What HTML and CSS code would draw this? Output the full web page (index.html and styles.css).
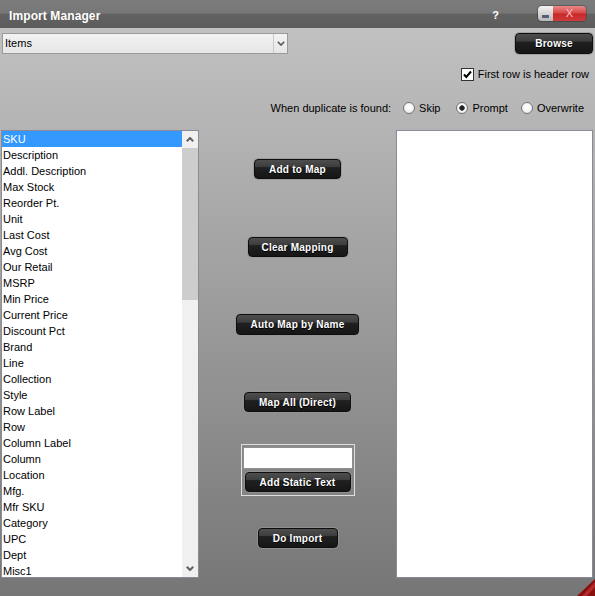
FILE: index.html
```html
<!DOCTYPE html>
<html>
<head>
<meta charset="utf-8">
<title>Import Manager</title>
<link rel="stylesheet" href="styles.css">
</head>
<body>
<div class="window">
  <div class="titlebar">
    <span class="title">Import Manager</span>
    <span class="help">?</span>
    <div class="winbtns">
      <span class="min"><i></i></span>
      <span class="close">X</span>
    </div>
  </div>
  <div class="content">
    <div class="toprow">
      <div class="select">
        <span class="sel-text">Items</span>
        <span class="sel-arrow"><svg width="8" height="5" viewBox="0 0 8 5"><path d="M0.8 0.8 L4 4 L7.2 0.8" fill="none" stroke="#555" stroke-width="1.6"/></svg></span>
      </div>
      <button class="btn browse">Browse</button>
    </div>
    <div class="checkrow">
      <span class="checkbox"><svg width="13" height="13" viewBox="0 0 13 13"><rect x="0.5" y="0.5" width="12" height="12" fill="#fff" stroke="#333"/><path d="M3 6.5 L5.3 9 L10 3.5" fill="none" stroke="#000" stroke-width="2"/></svg></span>
      <span>First row is header row</span>
    </div>
    <div class="radiorow">
      <span class="rlabel">When duplicate is found:</span>
      <span class="radio"></span><span class="rtext gap16">Skip</span>
      <span class="radio on"></span><span class="rtext gap13">Prompt</span>
      <span class="radio"></span><span class="rtext">Overwrite</span>
    </div>
    <div class="main">
      <div class="listbox">
        <ul class="items">
          <li class="sel">SKU</li>
          <li>Description</li>
          <li>Addl. Description</li>
          <li>Max Stock</li>
          <li>Reorder Pt.</li>
          <li>Unit</li>
          <li>Last Cost</li>
          <li>Avg Cost</li>
          <li>Our Retail</li>
          <li>MSRP</li>
          <li>Min Price</li>
          <li>Current Price</li>
          <li>Discount Pct</li>
          <li>Brand</li>
          <li>Line</li>
          <li>Collection</li>
          <li>Style</li>
          <li>Row Label</li>
          <li>Row</li>
          <li>Column Label</li>
          <li>Column</li>
          <li>Location</li>
          <li>Mfg.</li>
          <li>Mfr SKU</li>
          <li>Category</li>
          <li>UPC</li>
          <li>Dept</li>
          <li>Misc1</li>
        </ul>
        <div class="scrollbar">
          <span class="sb-btn"><svg width="8" height="5" viewBox="0 0 8 5"><path d="M0.8 4.2 L4 1 L7.2 4.2" fill="none" stroke="#606060" stroke-width="2"/></svg></span>
          <span class="sb-thumb"></span>
          <span class="sb-track"></span>
          <span class="sb-btn"><svg width="8" height="5" viewBox="0 0 8 5"><path d="M0.8 0.8 L4 4 L7.2 0.8" fill="none" stroke="#606060" stroke-width="2"/></svg></span>
        </div>
      </div>
      <div class="actions">
        <button class="btn b-add">Add to Map</button>
        <button class="btn b-clear">Clear Mapping</button>
        <button class="btn b-auto">Auto Map by Name</button>
        <button class="btn b-all">Map All (Direct)</button>
        <div class="static-group">
          <div class="static-input"></div>
          <button class="btn b-static">Add Static Text</button>
        </div>
        <button class="btn b-import">Do Import</button>
      </div>
      <div class="targetbox"></div>
    </div>
  </div>
  <svg class="grip" width="18" height="17" viewBox="0 0 18 17"><path d="M18 0 L18 17 L0 17 Z" fill="#8a1010"/><path d="M18 3 L18 8 L10 17 L5 17 Z" fill="#b52a2a"/></svg>
</div>
</body>
</html>
```

FILE: styles.css
```css
html, body {
  margin: 0;
  padding: 0;
}
body {
  width: 595px;
  height: 596px;
  overflow: hidden;
  font-family: "Liberation Sans", Arial, sans-serif;
  font-size: 11px;
  color: #000;
}
.window {
  position: relative;
  width: 595px;
  height: 596px;
  display: flex;
  flex-direction: column;
  background: linear-gradient(to bottom, #c1c1c1 0, #c1c1c1 28px, #767676 100%);
}

/* title bar */
.titlebar {
  flex: none;
  height: 28px;
  display: flex;
  align-items: center;
  padding: 0 9px;
  color: #fff;
  background: linear-gradient(to bottom, #7c7c7c 0, #777 13px, #626262 14px, #5c5c5c 100%);
}
.title {
  font-weight: bold;
  font-size: 12px;
  letter-spacing: 0.1px;
  padding-top: 3px;
}
.help {
  margin-left: auto;
  margin-right: 39px;
  font-weight: bold;
  font-size: 11px;
  padding-top: 1px;
}
.winbtns {
  display: flex;
  height: 15px;
  margin-top: -1px;
  border-radius: 4px;
  overflow: hidden;
  box-shadow: 0 0 0 1px rgba(40, 40, 40, 0.35);
}
.min {
  width: 15px;
  display: flex;
  align-items: flex-end;
  padding: 0 0 3px 4px;
  box-sizing: border-box;
  background: linear-gradient(to bottom, #f2f2f2 0, #d6d6d6 50%, #b8b8b8 100%);
}
.min i {
  display: block;
  width: 7px;
  height: 3px;
  background: #56607a;
}
.close {
  width: 33px;
  text-align: center;
  line-height: 15px;
  font-size: 11px;
  color: #f7c3c3;
  background: linear-gradient(to bottom, #ec8a8a 0, #d94848 45%, #c72828 55%, #d03b3b 100%);
}

/* content */
.content {
  flex: 1;
  display: flex;
  flex-direction: column;
}
.toprow {
  display: flex;
  justify-content: space-between;
  margin: 5px 2px 0 2px;
  height: 21px;
}
.select {
  width: 286px;
  height: 21px;
  box-sizing: border-box;
  border: 1px solid #9a9a9a;
  background: linear-gradient(to bottom, #f3f3f3, #e6e6e6);
  display: flex;
}
.sel-text {
  flex: 1;
  padding-left: 2px;
  line-height: 19px;
}
.sel-arrow {
  width: 13px;
  border-left: 1px solid #c9c9c9;
  display: flex;
  align-items: center;
  justify-content: center;
}

/* dark buttons */
.btn {
  box-sizing: border-box;
  height: 20px;
  padding: 0;
  border: 1px solid #0e0e0e;
  border-radius: 4px;
  background: linear-gradient(to bottom, #4e4e4e 0%, #3d3d3d 38%, #202020 42%, #161616 100%);
  box-shadow: 0 0 0 1px rgba(150, 150, 150, 0.7);
  color: #fff;
  font-family: "Liberation Sans", Arial, sans-serif;
  font-weight: bold;
  font-size: 10px;
  letter-spacing: 0.25px;
  text-shadow: 0 1px 0 #000;
  cursor: default;
}
.browse {
  width: 78px;
  height: 21px;
}

/* checkbox row */
.checkrow {
  display: flex;
  justify-content: flex-end;
  align-items: center;
  gap: 4px;
  height: 16px;
  margin: 12px 6px 0 0;
}
.checkbox {
  display: flex;
  width: 13px;
  height: 13px;
}

/* radio row */
.radiorow {
  display: flex;
  justify-content: flex-end;
  align-items: center;
  height: 16px;
  margin: 18px 11px 0 0;
}
.rlabel {
  margin-right: 12px;
}
.radio {
  width: 12px;
  height: 12px;
  box-sizing: border-box;
  border: 1px solid #767676;
  border-radius: 50%;
  background: radial-gradient(circle at 50% 40%, #fff 0, #f4f4f4 50%, #d8d8d8 100%);
  margin-right: 4px;
}
.radio.on {
  background: radial-gradient(circle, #1e1e1e 0, #2a2a2a 2.4px, #fff 3px, #f0f0f0 60%, #d8d8d8 100%);
}
.gap16 {
  margin-right: 16px;
}
.gap13 {
  margin-right: 13px;
}

/* main area */
.main {
  display: grid;
  grid-template-columns: 198px 197px 197px;
  height: 448px;
  margin: 14px 2px 0 1px;
}
.listbox {
  box-sizing: border-box;
  border: 1px solid #8a8a9a;
  background: #fff;
  display: flex;
  overflow: hidden;
}
.items {
  list-style: none;
  margin: 0;
  padding: 0;
  flex: 1;
  overflow: hidden;
}
.items li {
  height: 16px;
  line-height: 16px;
  padding-left: 1px;
  white-space: nowrap;
}
.items li.sel {
  background: #3399ff;
  color: #fff;
}
.scrollbar {
  width: 16px;
  flex: none;
  display: flex;
  flex-direction: column;
  background: #f0f0f0;
}
.sb-btn {
  height: 17px;
  display: flex;
  align-items: center;
  justify-content: center;
}
.sb-thumb {
  height: 152px;
  background: #cdcdcd;
}
.sb-track {
  flex: 1;
}

.actions {
  display: flex;
  flex-direction: column;
  align-items: center;
}
.b-add {
  margin-top: 29px;
  width: 87px;
}
.b-clear {
  margin-top: 58px;
  width: 100px;
}
.b-auto {
  margin-top: 57px;
  width: 123px;
  height: 21px;
}
.b-all {
  margin-top: 57px;
  width: 107px;
}
.static-group {
  margin-top: 32px;
  width: 114px;
  box-sizing: border-box;
  border: 1px solid #dedede;
  padding: 2px 1px 3px 1px;
  display: flex;
  flex-direction: column;
  align-items: center;
}
.static-input {
  width: 110px;
  height: 22px;
  box-sizing: border-box;
  border: 1px solid #8f8f8f;
  background: #fff;
  margin-bottom: 3px;
}
.b-static {
  width: 106px;
}
.b-import {
  margin-top: 32px;
  width: 80px;
}
.targetbox {
  box-sizing: border-box;
  border: 1px solid #8a8a9a;
  background: #fff;
}

.grip {
  position: absolute;
  right: 0;
  bottom: 0;
}
```
